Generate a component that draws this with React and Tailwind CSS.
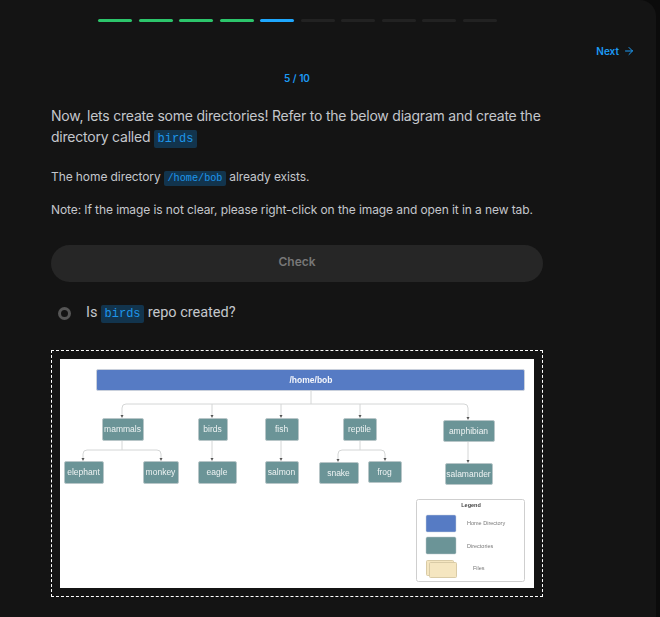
import { ArrowRight } from "lucide-react";

const bars = ["done", "done", "done", "done", "active", "todo", "todo", "todo", "todo", "todo"];

const barColors = {
	done: "bg-[#2cc56b]",
	active: "bg-[#1ea7fd]",
	todo: "bg-[#222222]",
};

const nodes = [
	{ x: 102, y: 418, w: 41, h: 22, label: "mammals" },
	{ x: 198, y: 418, w: 29, h: 22, label: "birds" },
	{ x: 265, y: 418, w: 33, h: 22, label: "fish" },
	{ x: 343, y: 418, w: 33, h: 22, label: "reptile" },
	{ x: 443, y: 420, w: 51, h: 21, label: "amphibian" },
	{ x: 64, y: 461, w: 39, h: 22, label: "elephant" },
	{ x: 143, y: 461, w: 35, h: 22, label: "monkey" },
	{ x: 198, y: 461, w: 38, h: 22, label: "eagle" },
	{ x: 265, y: 461, w: 33, h: 22, label: "salmon" },
	{ x: 319, y: 462, w: 39, h: 21, label: "snake" },
	{ x: 368, y: 461, w: 33, h: 21, label: "frog" },
	{ x: 445, y: 463, w: 47, h: 21, label: "salamander" },
];

const links = [
	"M311 390 V404",
	"M122 416 V408 Q122 404 126 404 H464 Q468 404 468 408 V418",
	"M212 404 V416",
	"M281 404 V416",
	"M360 404 V416",
	"M122 440 V450",
	"M83 459 V454 Q83 450 87 450 H157 Q161 450 161 454 V459",
	"M212 440 V459",
	"M281 440 V459",
	"M360 440 V450",
	"M338 460 V454 Q338 450 342 450 H381 Q385 450 385 454 V459",
	"M468 441 V461",
];

const arrows = [
	[122, 418], [212, 418], [281, 418], [360, 418], [468, 420],
	[83, 461], [161, 461], [212, 461], [281, 461], [338, 462], [385, 461], [468, 463],
];

function Code({ children }) {
	return (
		<code className="rounded-[2px] bg-[#12344d] px-[3.5px] py-0.5 font-['Liberation_Mono',monospace] text-[#1e96ea]">
			{children}
		</code>
	);
}

function Diagram() {
	return (
		<svg viewBox="60 359 474 229" className="block h-[229px] w-[474px] bg-white">
			<g className="blur-[0.4px]">
				<rect x="96.5" y="369.5" width="428" height="21" rx="1.5" fill="#567bc4" stroke="#c9d0dc" />
				<text x="311" y="382.5" textAnchor="middle" fontSize="8.5" fontWeight="600" fill="#f4f6fb" fontFamily="Liberation Sans, sans-serif">
					/home/bob
				</text>
				{links.map((d) => (
					<path key={d} d={d} fill="none" stroke="#d4d6d6" strokeWidth="1" />
				))}
				{arrows.map(([x, y]) => (
					<path key={`${x}-${y}`} d={`M${x - 1.5} ${y - 3} H${x + 1.5} L${x} ${y} Z`} fill="#555555" />
				))}
				{nodes.map((n) => (
					<g key={n.label}>
						<rect x={n.x + 0.5} y={n.y + 0.5} width={n.w} height={n.h} rx="1.5" fill="#6b9497" stroke="#b8c6c8" />
						<text
							x={n.x + n.w / 2}
							y={n.y + 13.5}
							textAnchor="middle"
							fontSize="8.5"
							fill="#eef3f3"
							fontFamily="Liberation Sans, sans-serif"
						>
							{n.label}
						</text>
					</g>
				))}
				<rect x="416.5" y="499.5" width="108" height="82" rx="2" fill="#ffffff" stroke="#cfcfcf" />
				<text x="471" y="506.5" textAnchor="middle" fontSize="5.5" fontWeight="600" fill="#444444" fontFamily="Liberation Sans, sans-serif">
					Legend
				</text>
				<rect x="426" y="515" width="30" height="17" rx="1.5" fill="#567bc4" stroke="#c9d0dc" strokeWidth="0.5" />
				<rect x="426" y="537" width="30" height="17" rx="1.5" fill="#6b9497" stroke="#b8c6c8" strokeWidth="0.5" />
				<rect x="426.5" y="560.5" width="27" height="15" rx="1" fill="#f5e6c0" stroke="#d9cba6" />
				<rect x="429.5" y="562.5" width="27" height="15" rx="1" fill="#f5e6c0" stroke="#d9cba6" />
				<g fontSize="5.5" fill="#777777" fontFamily="Liberation Sans, sans-serif">
					<text x="467" y="525">Home Directory</text>
					<text x="467" y="547.5">Directories</text>
					<text x="473" y="569.5">Files</text>
				</g>
			</g>
		</svg>
	);
}

export default function App() {
	return (
		<div className="min-h-[617px] w-[660px] bg-[#0b0b0b] font-['Inter',sans-serif]">
			<div className="h-[617px] w-[656px] overflow-hidden rounded-tr-[16px] bg-[#141414]">
				<div className="flex gap-[6.5px] pl-[98px] pt-[19px]">
					{bars.map((state, i) => (
						<div key={i} className={`h-[3px] w-[34px] rounded-[2px] ${barColors[state]}`} />
					))}
				</div>

				<div className="mt-[22px] flex items-center justify-end gap-1 pr-[21px] text-[10px] font-semibold leading-[14px] text-[#1c9bf5]">
					Next
					<ArrowRight size={12} strokeWidth={2} />
				</div>

				<p className="mt-[13px] w-[594px] text-center text-[10px] font-semibold leading-[14px] text-[#1c9bf5]">5 / 10</p>

				<div className="ml-[51px] w-[492px]">
					<div className="mt-[20px] text-[14px] leading-[21px] tracking-[-0.22px] text-[#c4c7cc]">
						Now, lets create some directories! Refer to the below diagram and create the directory called{" "}
						<span className="text-[12px] tracking-normal">
							<Code>birds</Code>
						</span>
					</div>

					<div className="mt-[18px] text-[12px] leading-[18px] tracking-[-0.09px] text-[#c4c7cc]">
						The home directory{" "}
						<span className="text-[10.2px] tracking-normal">
							<Code>/home/bob</Code>
						</span>{" "}
						already exists.
					</div>
					<div className="mt-[13px] text-[12px] leading-[18px] tracking-[-0.09px] text-[#c4c7cc]">
						Note: If the image is not clear, please right-click on the image and open it in a new tab.
					</div>

					<button
						type="button"
						className="mt-[26px] block h-[37px] w-full rounded-full bg-[#262626] pb-[4px] text-[12px] font-semibold text-[#777777]"
					>
						Check
					</button>

					<div className="mt-[21px] flex h-[20px] items-center pl-[7px] font-['Roboto',sans-serif] text-[14.5px] text-[#c4c7cc]">
						<span className="mr-[15px] h-[13px] w-[13px] rounded-full border-[3px] border-[#565656]" />
						<span>
							Is{" "}
							<span className="text-[12px]">
								<Code>birds</Code>
							</span>{" "}
							repo created?
						</span>
					</div>

					<div className="mt-[27px] border border-dashed border-white p-[8px]">
						<Diagram />
					</div>
				</div>
			</div>
		</div>
	);
}
